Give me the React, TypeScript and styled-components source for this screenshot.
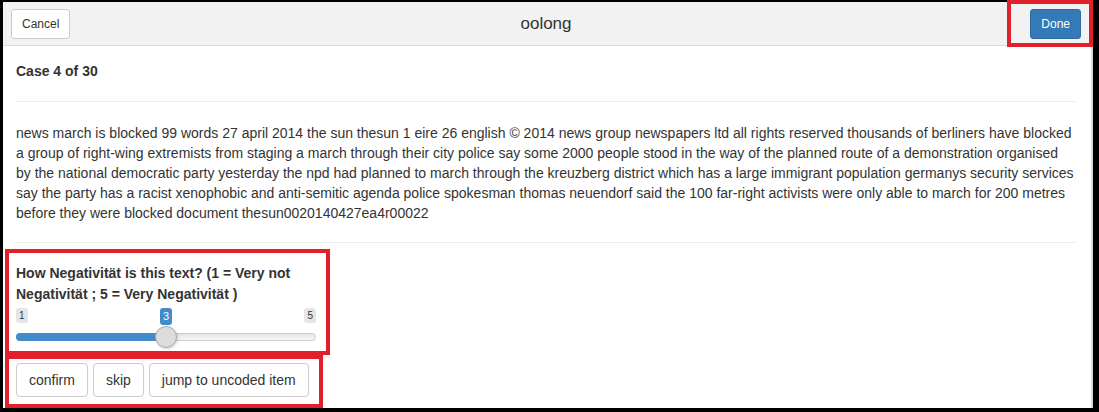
import React from "react";
import styled, { createGlobalStyle } from "styled-components";

const GlobalStyle = createGlobalStyle`
  html, body { margin: 0; padding: 0; background: #000; }
  body { font-family: "Liberation Sans", Arial, sans-serif; color: #333; }
  * { box-sizing: border-box; }
`;

const Frame = styled.div`
  position: relative;
  width: 1099px;
  height: 412px;
  background: #000;
  padding: 2px 6px 4px 3px;
  overflow: hidden;
`;

const Window = styled.div`
  height: 100%;
  background: #fff;
  border-right: 2px solid #d9d9d9;
  display: flex;
  flex-direction: column;
`;

const Header = styled.div`
  height: 44px;
  flex: none;
  background: #f2f2f2;
  border-bottom: 1px solid #dcdcdc;
  display: grid;
  grid-template-columns: 1fr auto 1fr;
  align-items: center;
  padding: 1px 10px 0 8px;
`;

const Title = styled.div`
  font-size: 17px;
  color: #333;
  text-align: center;
`;

const Btn = styled.button<{ $primary?: boolean; $small?: boolean }>`
  font-family: "Liberation Sans", Arial, sans-serif;
  font-size: ${(p) => (p.$small ? "12px" : "14px")};
  line-height: ${(p) => (p.$small ? "18px" : "20px")};
  padding: ${(p) => (p.$small ? "5px 10px" : "6px 12px")};
  border-radius: ${(p) => (p.$small ? "3px" : "4px")};
  border: 1px solid ${(p) => (p.$primary ? "#2e6da4" : "#ccc")};
  background: ${(p) => (p.$primary ? "#337ab7" : "#fff")};
  color: ${(p) => (p.$primary ? "#fff" : "#333")};
  cursor: pointer;
  white-space: nowrap;
`;

const Right = styled.div`
  justify-self: end;
`;
const Left = styled.div`
  justify-self: start;
`;

const Content = styled.div`
  padding: 15px 15px 0 13px;
  display: flex;
  flex-direction: column;
`;

const CaseTitle = styled.div`
  font-size: 14px;
  font-weight: bold;
  line-height: 20px;
  margin-bottom: 20px;
`;

const Rule = styled.hr<{ $after: number }>`
  border: 0;
  border-top: 1px solid #eee;
  margin: 0 0 ${(p) => p.$after}px 0;
  width: 1060px;
`;

const Paragraph = styled.p`
  font-size: 14px;
  line-height: 20px;
  margin: 0 0 19px 0;
  width: 1060px;
`;

const SliderGroup = styled.div`
  width: 300px;
  margin-bottom: 15px;
`;

const Label = styled.div`
  font-size: 14px;
  font-weight: bold;
  line-height: 21px;
  margin-bottom: 3px;
`;

const Irs = styled.div`
  position: relative;
  height: 40px;
`;

const Tag = styled.span<{ $active?: boolean }>`
  position: absolute;
  top: 0;
  font-size: ${(p) => (p.$active ? "11px" : "10px")};
  line-height: 1.333;
  padding: 1px 3px;
  border-radius: 3px;
  background: ${(p) => (p.$active ? "#428bca" : "rgba(0,0,0,0.1)")};
  color: ${(p) => (p.$active ? "#fff" : "#333")};
`;

const Track = styled.div`
  position: absolute;
  top: 25px;
  left: 0;
  right: 0;
  height: 8px;
  border: 1px solid #ccc;
  border-radius: 16px;
  background: linear-gradient(to bottom, #ddd -50%, #fff 150%);
`;

const Fill = styled.div`
  position: absolute;
  top: 25px;
  left: 0;
  height: 8px;
  background: #428bca;
  border-radius: 16px 0 0 16px;
`;

const Handle = styled.div`
  position: absolute;
  top: 18px;
  width: 22px;
  height: 22px;
  border: 1px solid #aaa;
  border-radius: 50%;
  background: #dcdcdc;
  box-shadow: 1px 1px 3px rgba(0, 0, 0, 0.15);
`;

const Actions = styled.div`
  display: flex;
  gap: 5px;
`;

const Annotation = styled.div<{ $w: number }>`
  position: absolute;
  border: ${(p) => p.$w}px solid #e1202c;
  pointer-events: none;
`;

const min = 1;
const max = 5;
const value = 3;
const width = 300;
const handleW = 22;

export default function App() {
  const pct = (value - min) / (max - min);
  const center = handleW / 2 + (width - handleW) * pct;
  return (
    <>
      <GlobalStyle />
      <Frame>
        <Window>
          <Header>
            <Left>
              <Btn $small>Cancel</Btn>
            </Left>
            <Title>oolong</Title>
            <Right>
              <Btn $small $primary>
                Done
              </Btn>
            </Right>
          </Header>
          <Content>
            <CaseTitle>Case 4 of 30</CaseTitle>
            <Rule $after={21} />
            <Paragraph>
              news march is blocked 99 words 27 april 2014 the sun thesun 1 eire 26 english © 2014 news group
              newspapers ltd all rights reserved thousands of berliners have blocked a group of right-wing
              extremists from staging a march through their city police say some 2000 people stood in the way of
              the planned route of a demonstration organised by the national democratic party yesterday the npd had
              planned to march through the kreuzberg district which has a large immigrant population germanys
              security services say the party has a racist xenophobic and anti-semitic agenda police spokesman
              thomas neuendorf said the 100 far-right activists were only able to march for 200 metres before they
              were blocked document thesun0020140427ea4r00022
            </Paragraph>
            <Rule $after={20} />
            <SliderGroup>
              <Label>How Negativität is this text? (1 = Very not Negativität ; 5 = Very Negativität )</Label>
              <Irs>
                <Track />
                <Fill style={{ width: center }} />
                <Tag style={{ left: 0 }}>{min}</Tag>
                <Tag style={{ right: 0 }}>{max}</Tag>
                <Tag $active style={{ left: center - 6 }}>
                  {value}
                </Tag>
                <Handle style={{ left: center - handleW / 2 }} />
              </Irs>
            </SliderGroup>
            <Actions>
              <Btn>confirm</Btn>
              <Btn>skip</Btn>
              <Btn>jump to uncoded item</Btn>
            </Actions>
          </Content>
        </Window>
        <Annotation $w={4} style={{ left: 1007, top: 0, width: 86, height: 47 }} />
        <Annotation $w={4} style={{ left: 5, top: 249, width: 325, height: 106 }} />
        <Annotation $w={4} style={{ left: 5, top: 355, width: 318, height: 53 }} />
      </Frame>
    </>
  );
}
